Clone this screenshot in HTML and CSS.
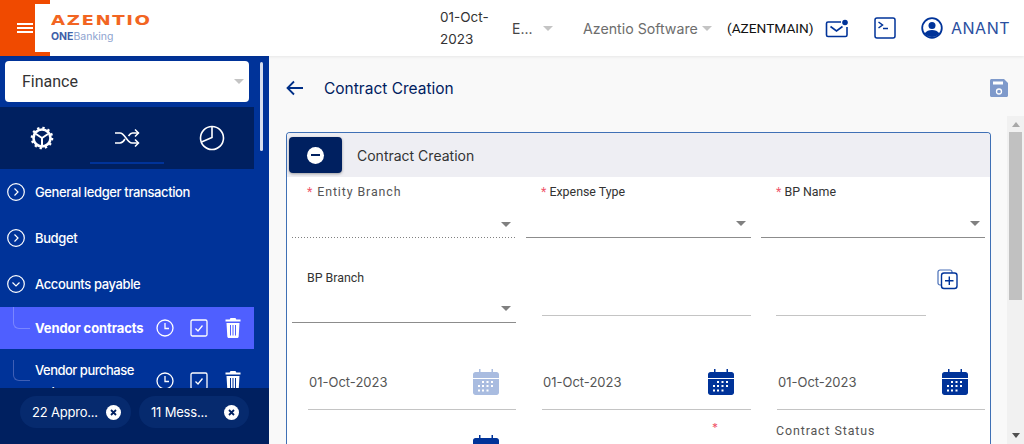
FILE: index.html
```html
<!DOCTYPE html>
<html>
  <head>
    <title>Contract Creation</title>
    <meta charset="utf-8" />
    <link rel="stylesheet" href="styles.css">
  </head>
  <body>
    <header class="topbar">
      <div class="menu-btn">
        <span class="burger"></span>
      </div>
      <div class="logo">
        <div class="logo-name">AZENTIO</div>
        <div class="logo-sub"><b>ONE</b>Banking</div>
      </div>
      <div class="topbar-right">
        <div class="top-date">01-Oct-<br />2023</div>
        <div class="top-entity">E...</div>
        <span class="caret caret-light entity-caret"></span>
        <div class="top-company">Azentio Software</div>
        <span class="caret caret-light company-caret"></span>
        <div class="top-code">(AZENTMAIN)</div>
        <svg class="top-icon mail-icon" width="24" height="22" viewBox="0 0 24 22" fill="none" stroke="#003399" stroke-width="1.600">
          <path d="M16 5H3a1.500 1.500 0 0 0-1.500 1.500V18A1.500 1.500 0 0 0 3 19.500H20.500a1.500 1.500 0 0 0 1.500-1.500V10" />
          <path d="M5.500 9.500l6 4.500 6-4.500" />
          <circle cx="20" cy="5.500" r="2.800" fill="#003399" stroke="none" />
        </svg>
        <svg class="top-icon term-icon" width="22" height="22" viewBox="0 0 22 22" fill="none" stroke="#003399" stroke-width="1.500">
          <rect x="1" y="1" width="20" height="20" rx="2" />
          <path d="M4.500 5l4 3-4 3M9 11.500h5" />
        </svg>
        <svg class="top-icon user-icon" width="22" height="22" viewBox="0 0 22 22">
          <circle cx="11" cy="11" r="9.800" fill="none" stroke="#003399" stroke-width="1.800" />
          <circle cx="11" cy="8.500" r="3.500" fill="#003399" />
          <path d="M3.500 16.500c1.800-2.500 4.500-3.500 7.500-3.500s5.700 1 7.500 3.500a9.800 9.800 0 0 1-15 0z" fill="#003399" />
        </svg>
        <div class="top-user">ANANT</div>
      </div>
    </header>

    <div class="layout">
      <aside class="sidebar">
        <div class="module-select">
          <span>Finance</span>
          <span class="caret caret-light"></span>
        </div>
        <div class="side-scrollthumb"></div>
        <div class="side-tabs">
          <div class="side-tab">
            <svg width="24" height="24" viewBox="0 0 24 24" fill="none" stroke="#fff">
              <circle cx="12" cy="12" r="8.500" stroke-width="2.600" />
              <circle cx="12" cy="12" r="10" stroke-width="2.600" stroke-dasharray="2.300 2.940" />
              <path d="M12 12L6 8M12 12l6-4M12 12v8" stroke-width="2" />
            </svg>
          </div>
          <div class="side-tab side-tab-active">
            <svg width="26" height="20" viewBox="0 0 26 20" fill="none" stroke="#fff" stroke-width="1.500">
              <path d="M1 5h5c5 0 7 10 12 10h6M1 15h5c2 0 3.500-1.500 5-4M14.500 8c1-1.500 2-3 4-3h6" />
              <path d="M21 1.500l3.500 3.500-3.500 3.500M21 11.500l3.500 3.500-3.500 3.500" />
            </svg>
          </div>
          <div class="side-tab">
            <svg width="26" height="26" viewBox="0 0 26 26" fill="none" stroke="#fff" stroke-width="1.600">
              <circle cx="13" cy="13" r="11.500" />
              <path d="M13 1.500V12.500L2.500 17" />
            </svg>
          </div>
        </div>

        <nav class="side-menu">
          <div class="menu-item">
            <svg class="chev" width="18" height="18" viewBox="0 0 18 18" fill="none" stroke="#fff" stroke-width="1.200"><circle cx="9" cy="9" r="8.300" /><path d="M7.500 5.500L11 9l-3.500 3.500" /></svg>
            <span>General ledger transaction</span>
          </div>
          <div class="menu-item">
            <svg class="chev" width="18" height="18" viewBox="0 0 18 18" fill="none" stroke="#fff" stroke-width="1.200"><circle cx="9" cy="9" r="8.300" /><path d="M7.500 5.500L11 9l-3.500 3.500" /></svg>
            <span>Budget</span>
          </div>
          <div class="menu-item">
            <svg class="chev" width="18" height="18" viewBox="0 0 18 18" fill="none" stroke="#fff" stroke-width="1.200"><circle cx="9" cy="9" r="8.300" /><path d="M5.500 7.500L9 11l3.500-3.500" /></svg>
            <span>Accounts payable</span>
          </div>
          <div class="sub-item sub-item-active">
            <span class="branch"></span>
            <span class="sub-label">Vendor contracts</span>
            <svg width="18" height="18" viewBox="0 0 18 18" fill="none" stroke="#fff" stroke-width="1.300"><circle cx="9" cy="9" r="8" /><path d="M9 4v5.500h4" /></svg>
            <svg width="18" height="18" viewBox="0 0 18 18" fill="none" stroke="#fff" stroke-width="1.300"><rect x="1" y="1" width="16" height="16" rx="1.500" /><path d="M5.500 9.500l2.500 2.500 4.500-5.500" /></svg>
            <svg class="trash" width="16" height="20" viewBox="0 0 16 20" fill="#fff"><path d="M5.500 0h5l.8 1.500H15.500v2H.5v-2h4.200zM1.500 5h13l-.8 13.500c0 .8-.7 1.500-1.500 1.500H3.800c-.8 0-1.500-.7-1.500-1.500zM5 7v10.500h1V7zm2.500 0v10.500h1V7zM10 7v10.500h1V7z" /></svg>
          </div>
          <div class="sub-item sub-item-tall">
            <span class="branch"></span>
            <span class="sub-label">Vendor purchase orders</span>
            <svg width="18" height="18" viewBox="0 0 18 18" fill="none" stroke="#fff" stroke-width="1.300"><circle cx="9" cy="9" r="8" /><path d="M9 4v5.500h4" /></svg>
            <svg width="18" height="18" viewBox="0 0 18 18" fill="none" stroke="#fff" stroke-width="1.300"><rect x="1" y="1" width="16" height="16" rx="1.500" /><path d="M5.500 9.500l2.500 2.500 4.500-5.500" /></svg>
            <svg class="trash" width="16" height="20" viewBox="0 0 16 20" fill="#fff"><path d="M5.500 0h5l.8 1.500H15.500v2H.5v-2h4.200zM1.500 5h13l-.8 13.500c0 .8-.7 1.500-1.500 1.500H3.800c-.8 0-1.500-.7-1.500-1.500zM5 7v10.500h1V7zm2.500 0v10.500h1V7zM10 7v10.500h1V7z" /></svg>
          </div>
        </nav>

        <div class="side-footer">
          <div class="pill">
            <span>22 Appro...</span>
            <svg width="15" height="15" viewBox="0 0 15 15"><circle cx="7.500" cy="7.500" r="7.500" fill="#fff" /><path d="M5 5l5 5M10 5l-5 5" stroke="#002060" stroke-width="1.800" /></svg>
          </div>
          <div class="pill">
            <span>11 Mess...</span>
            <svg width="15" height="15" viewBox="0 0 15 15"><circle cx="7.500" cy="7.500" r="7.500" fill="#fff" /><path d="M5 5l5 5M10 5l-5 5" stroke="#002060" stroke-width="1.800" /></svg>
          </div>
        </div>
      </aside>

      <main class="content">
        <div class="page-title">
          <svg width="18" height="16" viewBox="0 0 18 16" fill="none" stroke="#002f87" stroke-width="1.800"><path d="M17 8H2M8 1.500L1.500 8 8 14.500" /></svg>
          <h1>Contract Creation</h1>
          <svg class="save-icon" width="20" height="20" viewBox="0 0 20 20"><path d="M2.500 1H15l4 4v12.500c0 .8-.7 1.500-1.500 1.500h-15c-.8 0-1.500-.7-1.500-1.500v-15C1 1.700 1.700 1 2.500 1z" fill="#7f9acb" /><rect x="4" y="3.500" width="10" height="3" fill="#fff" /><circle cx="10" cy="13.500" r="2.500" fill="none" stroke="#fff" stroke-width="1.300" /></svg>
        </div>

        <section class="card">
          <div class="card-head">
            <div class="collapse-btn"><span class="minus"></span></div>
            <h2>Contract Creation</h2>
          </div>
          <div class="form-grid">
            <div class="field field-disabled">
              <label class="spaced"><em>*</em> Entity Branch</label>
              <span class="caret"></span>
            </div>
            <div class="field">
              <label><em>*</em> Expense Type</label>
              <span class="caret"></span>
            </div>
            <div class="field">
              <label><em>*</em> BP Name</label>
              <span class="caret"></span>
            </div>

            <div class="field field-branch">
              <label>BP Branch</label>
              <span class="caret"></span>
            </div>
            <div class="input-line input-line-short"></div>
            <div class="bp-add">
              <div class="input-line"></div>
              <svg width="21" height="21" viewBox="0 0 21 21" fill="none" stroke="#003399" stroke-width="1.200">
                <path d="M4 16H3a2 2 0 0 1-2-2V3a2 2 0 0 1 2-2h10a2 2 0 0 1 2 2v1" stroke="#4a70b8" />
                <rect x="4.500" y="4" width="15.500" height="15.500" rx="2.500" stroke-width="1.400" />
                <path d="M12.300 7.500v8.500M8 11.800h8.500" stroke-width="1.400" />
              </svg>
            </div>

            <div class="date-field">
              <span>01-Oct-2023</span>
              <svg class="cal cal-off" width="26" height="26"><use href="#cal" /></svg>
            </div>
            <div class="date-field">
              <span>01-Oct-2023</span>
              <svg class="cal" width="26" height="26"><use href="#cal" /></svg>
            </div>
            <div class="date-field">
              <span>01-Oct-2023</span>
              <svg class="cal" width="26" height="26"><use href="#cal" /></svg>
            </div>

            <div class="last-cell">
              <svg class="cal" width="26" height="26"><use href="#cal" /></svg>
            </div>
            <div class="last-cell last-cell-star"><em>*</em></div>
            <div class="last-cell last-cell-status"><label class="spaced">Contract Status</label></div>
          </div>
        </section>

        <div class="scrollbar">
          <span class="scroll-arrow scroll-up"></span>
          <div class="scroll-thumb"></div>
          <span class="scroll-arrow scroll-down"></span>
        </div>
      </main>
    </div>

    <svg class="sprites" width="0" height="0">
      <symbol id="cal" viewBox="0 0 26 26">
        <path d="M0 5.500C0 4.100 1.100 3 2.500 3H6V0h1.500v3h11V0H20v3h3.500C24.900 3 26 4.100 26 5.500V9H0z" />
        <path d="M0 10h26v13.500c0 1.400-1.100 2.500-2.500 2.500h-21C1.100 26 0 24.900 0 23.500z" />
        <path fill="#fff" d="M9 12h2v2H9zM13.500 12h2v2h-2zM18 12h2v2h-2zM5 16h2v2H5zM9 16h2v2H9zM13.500 16h2v2h-2zM18 16h2v2h-2zM5 20.500h2v2H5zM9 20.500h2v2H9zM13.500 20.500h2v2h-2z" />
      </symbol>
    </svg>
  </body>
</html>
```

FILE: styles.css
```css
* {
  box-sizing: border-box;
}

html,
body {
  height: 100%;
  margin: 0;
  overflow: hidden;
}

body {
  font-family: Inter, "Liberation Sans", sans-serif;
  background-color: #f9f9f9;
  display: flex;
  flex-direction: column;
}

.sprites {
  position: absolute;
}

em {
  font-style: normal;
  color: #f0556a;
}

/* carets */
.caret {
  display: block;
  width: 0;
  height: 0;
  border-left: 5px solid transparent;
  border-right: 5px solid transparent;
  border-top: 5px solid #808080;
}

.caret-light {
  border-top-color: #c4c4c4;
}

/* top bar */
.topbar {
  display: flex;
  height: 56px;
  flex-shrink: 0;
  background-color: #fff;
  box-shadow: 0 1px 3px rgba(0, 0, 0, 0.08);
  position: relative;
  z-index: 2;
}

.menu-btn {
  width: 50px;
  background-color: #f04a00;
  display: flex;
  align-items: center;
  justify-content: center;
}

.burger {
  display: block;
  width: 16px;
  height: 10px;
  border-top: 2px solid #fff;
  border-bottom: 2px solid #fff;
  position: relative;
}

.burger::after {
  content: "";
  position: absolute;
  left: 0;
  right: 0;
  top: 2px;
  height: 2px;
  background-color: #fff;
}

.logo {
  width: 125px;
  margin: 4px 0 4px -15px;
  padding: 9px 0 0 16px;
  background-color: #fff;
}

.logo-name {
  font-family: "DejaVu Sans", sans-serif;
  font-weight: 700;
  font-size: 14px;
  line-height: 14px;
  letter-spacing: 1.200px;
  color: #f26522;
  transform: scaleX(1.300);
  transform-origin: left center;
}

.logo-sub {
  font-size: 10.500px;
  line-height: 13px;
  margin-top: 3px;
  color: #8ea3cf;
}

.logo-sub b {
  color: #3f5fa8;
}

.topbar-right {
  flex: 1;
  display: flex;
  align-items: center;
  padding-left: 280px;
}

.top-date {
  font-size: 13.500px;
  line-height: 22px;
  color: #333;
  width: 72px;
}

.top-entity {
  font-size: 14px;
  color: #444;
  width: 31px;
}

.entity-caret {
  margin-right: 30px;
}

.top-company {
  font-size: 14.200px;
  color: #6d6d6d;
  width: 119px;
}

.company-caret {
  margin-right: 15px;
}

.top-code {
  font-family: Roboto, sans-serif;
  font-size: 13.700px;
  color: #111;
  width: 98px;
}

.top-icon {
  flex-shrink: 0;
}

.mail-icon {
  margin-right: 25px;
}

.term-icon {
  margin-right: 25px;
}

.top-user {
  font-size: 16px;
  color: #2a4f9f;
  letter-spacing: 0.500px;
  margin-left: 8px;
}

/* page body */
.layout {
  flex: 1;
  display: flex;
  min-height: 0;
}

.sidebar {
  width: 269px;
  flex-shrink: 0;
  background-color: #003399;
  position: relative;
  overflow: hidden;
}

.module-select {
  width: 244px;
  height: 41px;
  margin: 5px 0 0 5px;
  padding: 0 5px 0 17px;
  display: flex;
  align-items: center;
  justify-content: space-between;
  background-color: #fff;
  border-radius: 4px;
  font-family: Roboto, sans-serif;
  font-size: 16px;
  color: #333;
}

.side-scrollthumb {
  position: absolute;
  left: 260px;
  top: 6px;
  width: 3px;
  height: 89px;
  background-color: #d7deee;
  border-radius: 2px;
}

.side-tabs {
  width: 254px;
  height: 62px;
  margin-top: 5px;
  background-color: #002060;
  display: flex;
}

.side-tab {
  flex: 1;
  display: flex;
  align-items: center;
  justify-content: center;
  position: relative;
}

.side-tab-active::after {
  content: "";
  position: absolute;
  left: 5px;
  right: 5px;
  bottom: 5px;
  height: 2px;
  background-color: #003399;
}

.menu-item {
  display: flex;
  align-items: center;
  gap: 10px;
  height: 46px;
  padding-left: 7px;
  width: 254px;
  font-size: 13px;
  font-weight: 500;
  letter-spacing: -0.380px;
  color: #fff;
}

.sub-item {
  width: 254px;
  height: 42px;
  display: flex;
  align-items: center;
  padding-left: 35px;
  gap: 16px;
  position: relative;
  font-size: 13px;
  font-weight: 500;
  letter-spacing: -0.500px;
  line-height: 22px;
  color: #fff;
}

.sub-item-active {
  background-color: #4f5fff;
  font-weight: 700;
  letter-spacing: -0.100px;
  white-space: nowrap;
}

.sub-item-tall {
  height: 64px;
}

.sub-label {
  width: 110px;
  flex-shrink: 0;
  margin-right: -5px;
}

.trash {
  margin-left: 1px;
}

.branch {
  position: absolute;
  left: 13px;
  top: 0;
  width: 17px;
  height: 22px;
  border-left: 1px solid #7a86ff;
  border-bottom: 1px solid #7a86ff;
  border-bottom-left-radius: 6px;
}

.sub-item-tall .branch {
  top: 11px;
  height: 21px;
  border-color: #3f5fb5;
}

.side-footer {
  position: absolute;
  left: 0;
  right: 0;
  bottom: 0;
  height: 56px;
  background-color: #002060;
  display: flex;
  align-items: center;
  gap: 8px;
  padding: 0 0 8px 20px;
}

.pill {
  display: flex;
  align-items: center;
  justify-content: space-between;
  height: 32px;
  padding: 0 10px 0 12px;
  border-radius: 16px;
  background-color: #062a6e;
  font-size: 13px;
  letter-spacing: -0.200px;
  color: #fff;
}

.pill:first-child {
  width: 111px;
}

.pill:last-child {
  width: 110px;
}

/* content area */
.content {
  flex: 1;
  position: relative;
  overflow: hidden;
  padding: 0 33px 0 17px;
}

.page-title {
  display: flex;
  align-items: center;
  height: 64px;
}

.page-title h1 {
  margin: 0 0 0 20px;
  font-size: 15.500px;
  font-weight: 400;
  color: #002060;
  flex: 1;
}

.save-icon {
  margin-right: -18px;
}

.card {
  margin-top: 12px;
  background-color: #fff;
  border: 1px solid #3f70b5;
  border-bottom: 0;
  border-radius: 4px 4px 0 0;
  height: 320px;
  overflow: hidden;
}

.card-head {
  display: flex;
  align-items: center;
  height: 44px;
  padding: 4px 0 4px 2px;
  background-color: #eeeef3;
}

.collapse-btn {
  width: 53px;
  height: 36px;
  background-color: #002060;
  border-radius: 4px;
  box-shadow: 0 1px 3px rgba(0, 0, 0, 0.35);
  display: flex;
  align-items: center;
  justify-content: center;
}

.minus {
  display: block;
  width: 17px;
  height: 17px;
  border-radius: 50%;
  background-color: #fff;
  position: relative;
}

.minus::after {
  content: "";
  position: absolute;
  left: 4px;
  right: 4px;
  top: 7px;
  height: 2px;
  background-color: #002060;
}

.card-head h2 {
  margin: 0 0 0 15px;
  font-size: 14px;
  font-weight: 400;
  color: #333;
}

.form-grid {
  display: grid;
  grid-template-columns: 224px 225px 224px;
  grid-template-rows: 61px 85px 87px auto;
  column-gap: 10px;
  padding: 0 5px;
}

.field {
  border-bottom: 1px solid #8c8c8c;
  position: relative;
}

.field label,
.last-cell label {
  position: absolute;
  left: 15px;
  top: 7px;
  font-family: Roboto, sans-serif;
  font-size: 12.400px;
  color: #333;
}

.spaced {
  letter-spacing: 0.900px;
  color: #555 !important;
}

.field .caret {
  position: absolute;
  right: 5px;
  bottom: 11px;
}

.field-disabled {
  border-bottom: 0;
  background: linear-gradient(to right, #808080 1px, transparent 1px) left bottom / 3px 1px repeat-x;
}

.field-branch {
  margin-top: 25px;
}

.input-line {
  border-bottom: 1px solid #c4c4c4;
}

.input-line-short {
  margin: 0 0 7px 16px;
}

.bp-add {
  display: flex;
  align-items: flex-start;
  padding: 31px 27px 0 15px;
  position: relative;
}

.bp-add .input-line {
  position: absolute;
  left: 15px;
  right: 59px;
  bottom: 7px;
}

.bp-add svg {
  margin-left: auto;
}

.date-field {
  margin: 0 0 0 16px;
  padding: 31px 17px 0 1px;
  border-bottom: 1px solid #c4c4c4;
  display: flex;
  align-items: center;
  justify-content: space-between;
  font-size: 13px;
  color: #555;
}

.cal {
  fill: #003399;
  flex-shrink: 0;
}

.cal-off {
  fill: #a9bce0;
}

.last-cell {
  position: relative;
  height: 40px;
}

.last-cell > .cal {
  position: absolute;
  right: 17px;
  top: 25px;
}

.last-cell-star em {
  position: absolute;
  left: 186px;
  top: 10px;
  font-size: 12px;
}

.last-cell-status label {
  left: 15px;
  top: 13px;
}

/* page scrollbar */
.scrollbar {
  position: absolute;
  right: 0;
  top: 60px;
  bottom: 0;
  width: 17px;
  background-color: #f1f1f1;
  display: flex;
  flex-direction: column;
  align-items: center;
}

.scroll-thumb {
  width: 13px;
  height: 168px;
  margin-top: 5px;
  background-color: #c1c1c1;
}

.scroll-arrow {
  display: block;
  width: 0;
  height: 0;
  border-left: 4px solid transparent;
  border-right: 4px solid transparent;
}

.scroll-up {
  margin-top: 6px;
  border-bottom: 5px solid #a8a8a8;
}

.scroll-down {
  margin-top: auto;
  margin-bottom: 6px;
  border-top: 5px solid #505050;
}
```
